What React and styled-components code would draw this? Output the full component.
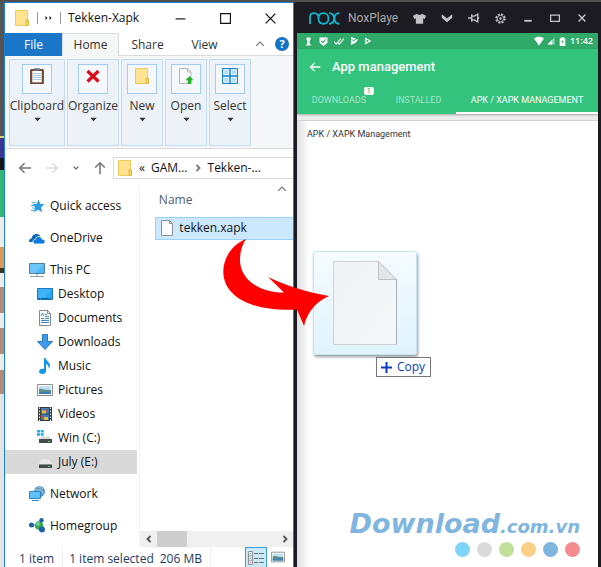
import styled, { createGlobalStyle, css } from "styled-components";

const navGroups = [
  [{ label: "Quick access", icon: "star" }],
  [{ label: "OneDrive", icon: "cloud" }],
  [
    { label: "This PC", icon: "pc" },
    { label: "Desktop", icon: "desktop", nested: true },
    { label: "Documents", icon: "documents", nested: true },
    { label: "Downloads", icon: "downloads", nested: true },
    { label: "Music", icon: "music", nested: true },
    { label: "Pictures", icon: "pictures", nested: true },
    { label: "Videos", icon: "videos", nested: true },
    { label: "Win (C:)", icon: "windrive", nested: true },
    { label: "July (E:)", icon: "drive", nested: true, selected: true },
  ],
  [{ label: "Network", icon: "network" }],
  [{ label: "Homegroup", icon: "homegroup" }],
];

const ribbonItems = [
  { label: "Clipboard", icon: "clipboard", width: 56 },
  { label: "Organize", icon: "cross", width: 52 },
  { label: "New", icon: "folder", width: 42 },
  { label: "Open", icon: "openfile", width: 42 },
  { label: "Select", icon: "select", width: 42 },
];

const dots = ["#7fd4f7", "#dadada", "#c3e09b", "#fbcf86", "#7fb5de", "#f58c8f"];

// 16x16 drawings, shared by the tree, the ribbon and the bars
const glyphs = {
  star: (
    <>
      <path d="M9.500 1.500l1.700 4.300 4.300.4-3.500 3.100 1.200 4.900-4.200-2.400-4.300 2.500 1.500-5L3.500 6l4.300-.2z" fill="#2a9be3" />
      <path d="M3 4.500h4M2 7.500h4M3 10h3M2 12.500h3" stroke="#2a9be3" strokeWidth=".8" />
    </>
  ),
  cloud: (
    <>
      <path d="M0 11.500c0-2 1-3 2.500-3C3 5.500 5 4 7.500 4c2 0 3.500 1 4 2.500L5 12H1z" fill="#0b67b8" />
      <path
        d="M6.500 14C4.500 14 4 12.500 4 11.700c0-1.500 1-2.300 2.200-2.300C6.700 7.300 8.300 6.300 10 6.500c1.600.1 2.700 1.100 3 2.600 2 .1 3 1.100 3 2.500S15 14 13.700 14z"
        fill="#0f7bdd"
        stroke="#fff"
        strokeWidth=".8"
      />
    </>
  ),
  pc: (
    <>
      <path d="M.5 1.500h15v10H.5z" fill="#4fb8f5" stroke="#4d7f9e" />
      <path d="M1 2h14L6 11H1z" fill="#6cc6f9" />
      <path d="M7 12h2v2H7z" fill="#bcc9d2" />
      <path d="M1 14.500h14" stroke="#8ba0ae" />
    </>
  ),
  desktop: (
    <>
      <path d="M.5 2.500h15v11H.5z" fill="#2ba6f3" stroke="#1678bd" />
      <path d="M1 3h14L8 12H1z" fill="#3fb2f7" />
      <path d="M1 12.500h14" stroke="#125f9b" strokeDasharray="2 1 8 1 1 1" />
    </>
  ),
  documents: (
    <>
      <path d="M2.500.5h8l3 3v12h-11z" fill="#fff" stroke="#84898d" />
      <path d="M10.500.5v3h3" fill="none" stroke="#84898d" />
      <path d="M4 6l1.500-3L7 6M8 4.500h2M8 6.500h4M4 8.500h3M8 8.500h4M4 10.500h8M4 12.500h8" fill="none" stroke="#3a8ac8" />
    </>
  ),
  downloads: <path d="M5.500.5h5v7h5L8 15.500.5 7.500h5z" fill="#3d9bea" stroke="#2b79bf" />,
  music: (
    <path
      d="M7 0h1.500c.5 3 4.500 4 4.500 7.500 0 1.500-.7 2.500-1.500 3.300.5-2.500-.3-4-2.500-4.800v7c0 1.800-1.500 3-3.500 3S2 15 2 13.600c0-1.600 1.500-2.800 3.500-2.800.5 0 1 .1 1.500.2z"
      fill="#1197ea"
    />
  ),
  pictures: (
    <>
      <path d="M.5 2.500h15v11H.5z" fill="#fff" stroke="#8d8d8d" />
      <path d="M2 4h12v8H2z" fill="#bfe1f5" />
      <path d="M2 7c3-1 5 1 12 1v4H2z" fill="#5d8f8a" />
      <path d="M2 10c4 1 8-1 12 0v2H2z" fill="#3b7fb6" />
    </>
  ),
  videos: (
    <>
      <path d="M1 1h14v14H1z" fill="#3a3a3a" />
      <path d="M2.500 1.500v14M13.500 1.500v14" stroke="#f2f2f2" strokeDasharray="1.500 1.500" />
      <path d="M4 2h8v5.500H4zM4 8.500h8V14H4z" fill="#3b7dc4" />
      <path d="M5 4.500h4v3H5zM7 11h4v3H7z" fill="#e2bf3c" />
      <path d="M9 3h2v3H9zM5 10h2v2H5z" fill="#bb5145" />
    </>
  ),
  drive: (
    <>
      <path d="M4.500 5.500h8L15 10H2z" fill="#e9e9e9" />
      <path d="M2 10h13v4H2z" fill="#454a4d" />
      <path d="M2 10.500h13" stroke="#8b8f92" />
      <path d="M11 12h2v1h-2z" fill="#4ee23c" />
    </>
  ),
  windrive: (
    <>
      <path d="M0 0h3v2.500H0zM3.700 0h3v2.500h-3zM0 3.200h3v2.600H0zM3.700 3.200h3v2.600h-3z" fill="#17b1ef" />
      <path d="M4.500 6.500h8L15 10H2z" fill="#d9d9d9" />
      <path d="M2 9h13v4H2z" fill="#454a4d" />
      <path d="M11 11h2v1h-2z" fill="#4ee23c" />
    </>
  ),
  network: (
    <>
      <circle cx="10.500" cy="5.500" r="5.500" fill="#5a94bd" />
      <path d="M6 3c2 2 4 0 6 1s1 4 3 4M9 1c2 1 3 0 5 2" stroke="#b5d6ea" fill="none" />
      <path d="M.5 5.500h11v7H.5z" fill="#5cc2f8" stroke="#2f86bd" />
      <path d="M3 14.500h7" stroke="#2f86bd" />
    </>
  ),
  homegroup: (
    <>
      <path d="M10 7l2-5M10 8l3 4M2 7h8" stroke="#7ba9c6" />
      <circle cx="10" cy="7.500" r="4.300" fill="#38a852" />
      <circle cx="9" cy="6" r="2" fill="#71d184" />
      <circle cx="2.500" cy="7" r="2.500" fill="#1c62a8" />
      <circle cx="12.500" cy="2.200" r="2.200" fill="#1c62a8" />
      <circle cx="13" cy="11.500" r="3" fill="#1c62a8" />
    </>
  ),
  clipboard: (
    <>
      <path d="M1.700 1.700h12.600v14H1.700z" fill="#7a5236" stroke="#5c3b25" />
      <path d="M3.300 3h9.400v11.300H3.300z" fill="#fff" />
      <path d="M4 5.500h8M4 7.500h8M4 9.500h8M4 11.500h8" stroke="#a9cbe6" />
      <path d="M5 .3h6v2.400H5z" fill="#6b7177" />
    </>
  ),
  cross: <path d="M2.500 3l11 10.500M13.500 3l-11 10.500" stroke="#dc0b1c" strokeWidth="3.200" />,
  folder: (
    <>
      <path d="M1.500.5h12V15.500h-12z" fill="#ffe391" stroke="#eecb5a" />
      <path d="M12 10h2.500v5.500H12z" fill="#fbd65f" stroke="#e2b63e" />
    </>
  ),
  openfile: (
    <>
      <path d="M1.500.5h8l3.500 3.500v11.500H1.500z" fill="#f9fafb" stroke="#b0b4b8" />
      <path d="M9.500.5V4H13" fill="none" stroke="#b0b4b8" />
      <path d="M11.500 8l4 4.200h-2.300V16H9.800v-3.800H7.500z" fill="#22b32b" />
    </>
  ),
  select: (
    <>
      <path d="M.5.5h15v15H.5z" fill="#aedcf9" stroke="#1e84cf" />
      <path d="M8 0v16M0 8h16" stroke="#1e84cf" strokeWidth="1.400" />
      <path d="M1.800 1.800h4.700v4.700H1.800zM9.500 1.800h4.700v4.700H9.500zM1.800 9.500h4.700v4.700H1.800zM9.500 9.500h4.700v4.700H9.500z" fill="none" stroke="#e6f5fe" />
    </>
  ),
  file: (
    <>
      <path d="M1.500.5h8l3 3v12h-11z" fill="#fbfbfb" stroke="#8f9499" />
      <path d="M9.500.5v3h3" fill="none" stroke="#8f9499" />
    </>
  ),
  details: (
    <>
      <path d="M.5 1.500h4v13h-4zM.5 5.800h4M.5 10.200h4" fill="#fff" stroke="#8a8f94" />
      <path d="M6 3.500h4M11 3.500h5M6 8.500h4M11 8.500h5M6 12.500h4M11 12.500h5" stroke="#6d7276" />
      <path d="M2 3.500h1" stroke="#3c78b4" />
      <path d="M2 8h1" stroke="#3f9b51" />
      <path d="M2 12.500h1" stroke="#d03b32" />
    </>
  ),
  back: <path d="M15 8H2M7.500 2.500L2 8l5.500 5.500" fill="none" stroke="currentColor" strokeWidth="1.800" />,
  forward: <path d="M1 8h13M8.500 2.500L14 8l-5.500 5.500" fill="none" stroke="currentColor" strokeWidth="1.800" />,
  up: <path d="M8 15V2M2.500 7.500L8 2l5.500 5.500" fill="none" stroke="currentColor" strokeWidth="1.800" />,
  chevDown: <path d="M3 5l5 5 5-5" fill="none" stroke="currentColor" strokeWidth="2.600" />,
  chevUp: <path d="M2 11l6-6 6 6" fill="none" stroke="currentColor" strokeWidth="2" />,
  chevLeft: <path d="M11 2L5 8l6 6" fill="none" stroke="currentColor" strokeWidth="3.600" />,
  chevRight: <path d="M5 2l6 6-6 6" fill="none" stroke="currentColor" strokeWidth="3.600" />,
  crumbArrow: <path d="M5 2l6 6-6 6" fill="none" stroke="#777" strokeWidth="3.600" />,
  caret: <path d="M1 4h14l-7 8z" fill="currentColor" />,
  minimize: <path d="M2 8.500h12" stroke="currentColor" strokeWidth="1.400" />,
  maximize: <path d="M2 2h12v12H2z" fill="none" stroke="currentColor" strokeWidth="1.400" />,
  close: <path d="M2 2l12 12M14 2L2 14" stroke="currentColor" strokeWidth="1.600" />,
  more: <path d="M1 4l4 4-4 4zM9 4l4 4-4 4z" fill="currentColor" />,
  shirt: <path d="M5 2c1 2 5 2 6 0l5 2.500-1.500 4-2-.8V14.500h-9V7.700l-2 .8L0 4.500z" fill="currentColor" />,
  bigChev: <path d="M1 3l7 5.500L15 3v4.500L8 13.500 1 7.500z" fill="currentColor" />,
  pin: <path d="M0 8h5M5 3v10M5 5.500h3.500L13 3v10l-4.500-2.500H5M13 8h2" fill="none" stroke="currentColor" strokeWidth="1.800" />,
  gear: (
    <>
      <circle cx="8" cy="8" r="6.200" fill="none" stroke="currentColor" strokeWidth="2.600" strokeDasharray="2.900 1.970" />
      <circle cx="8" cy="8" r="4.600" fill="none" stroke="currentColor" strokeWidth="1.200" />
      <circle cx="8" cy="8" r="1.800" fill="currentColor" />
    </>
  ),
  noxMin: <path d="M2 12.500h12" stroke="currentColor" strokeWidth="3" />,
  noxMax: <path d="M1 3.500h14v10H1z" fill="none" stroke="currentColor" strokeWidth="2" />,
  noxClose: <path d="M2.500 2.500l11 11M13.500 2.500l-11 11" stroke="currentColor" strokeWidth="2.200" />,
  keyhole: <path d="M5 1h6l1 3-2 3v4l3 4H3l3-4V7L4 4z" fill="currentColor" />,
  shield: (
    <>
      <path d="M1 1h14v9l-7 6-7-6z" fill="currentColor" />
      <path d="M4 7l3 3 5-6" fill="none" stroke="#2faa69" strokeWidth="2" />
    </>
  ),
  checks: <path d="M0 9l3.500 4L11 4M6 10l2.500 3L16 4" fill="none" stroke="currentColor" strokeWidth="1.800" />,
  playOutline: (
    <>
      <path d="M2 1l13 7-13 7z" fill="currentColor" />
      <path d="M5 5l5 3-5 3z" fill="#2faa69" />
    </>
  ),
  playCheck: (
    <>
      <path d="M2 0l14 5-4 6L2 16z" fill="currentColor" />
      <path d="M3 4l4 4 8-6" fill="none" stroke="#2faa69" strokeWidth="2" />
    </>
  ),
  wifi: <path d="M0 4c5-4 11-4 16 0L8 15z" fill="currentColor" />,
  signal: (
    <>
      <path d="M1 15L15 1v14z" fill="currentColor" opacity=".5" />
      <path d="M1 15l9-9v9z" fill="currentColor" />
    </>
  ),
  battery: (
    <>
      <path d="M3 2h3V0h4v2h3v14H3z" fill="currentColor" />
      <path d="M9 4L5.500 9H8l-1 4 3.500-5H8z" fill="#2faa69" />
    </>
  ),
};

function Icon({ name, size = 16 }) {
  return (
    <Glyph width={size} height={size} viewBox="0 0 16 16" aria-hidden="true">
      {glyphs[name]}
    </Glyph>
  );
}

function Explorer() {
  return (
    <ExplorerWindow>
      <TitleBar>
        <Icon name="folder" />
        <Divider />
        <Icon name="more" size={8} />
        <Divider />
        <WindowTitle>Tekken-Xapk</WindowTitle>
        <WindowButtons>
          <WindowButton aria-label="Minimize">
            <Icon name="minimize" size={13} />
          </WindowButton>
          <WindowButton aria-label="Maximize">
            <Icon name="maximize" size={13} />
          </WindowButton>
          <WindowButton aria-label="Close">
            <Icon name="close" size={13} />
          </WindowButton>
        </WindowButtons>
      </TitleBar>
      <MenuTabs>
        <MenuTab $kind="file">File</MenuTab>
        <MenuTab $kind="active">Home</MenuTab>
        <MenuTab>Share</MenuTab>
        <MenuTab>View</MenuTab>
        <MenuTools>
          <PlainButton aria-label="Collapse ribbon">
            <Icon name="chevUp" size={10} />
          </PlainButton>
          <HelpButton aria-label="Help">?</HelpButton>
        </MenuTools>
      </MenuTabs>
      <Ribbon>
        {ribbonItems.map((item) => (
          <RibbonButton key={item.label} $width={item.width}>
            <RibbonIcon>
              <Icon name={item.icon} />
            </RibbonIcon>
            <span>{item.label}</span>
            <Icon name="caret" size={7} />
          </RibbonButton>
        ))}
      </Ribbon>
      <AddressRow>
        <AddressButtons>
          <PlainButton aria-label="Back">
            <Icon name="back" size={14} />
          </PlainButton>
          <PlainButton aria-label="Forward" $faded>
            <Icon name="forward" size={14} />
          </PlainButton>
          <PlainButton aria-label="Recent locations">
            <Icon name="chevDown" size={8} />
          </PlainButton>
          <PlainButton aria-label="Up">
            <Icon name="up" size={14} />
          </PlainButton>
        </AddressButtons>
        <AddressBox>
          <Icon name="folder" />
          <Crumb href="#root">«</Crumb>
          <Crumb href="#games">GAM...</Crumb>
          <Icon name="crumbArrow" size={8} />
          <Crumb href="#tekken">Tekken-...</Crumb>
        </AddressBox>
      </AddressRow>
      <Body>
        <Tree aria-label="Folders">
          {navGroups.map((group) => (
            <TreeGroup key={group[0].label}>
              {group.map((item) => (
                <TreeLink
                  key={item.label}
                  href={`#${item.icon}`}
                  $nested={item.nested}
                  $selected={item.selected}
                >
                  <Icon name={item.icon} />
                  {item.label}
                </TreeLink>
              ))}
            </TreeGroup>
          ))}
        </Tree>
        <FilePane>
          <SortMark>
            <Icon name="chevUp" size={10} />
          </SortMark>
          <FileTable>
            <thead>
              <tr>
                <FileHead>Name</FileHead>
              </tr>
            </thead>
            <tbody>
              <tr>
                <FileCell>
                  <FileName>
                    <Icon name="file" />
                    tekken.xapk
                  </FileName>
                </FileCell>
              </tr>
            </tbody>
          </FileTable>
          <ScrollBar>
            <ScrollButton aria-label="Scroll left">
              <Icon name="chevLeft" size={8} />
            </ScrollButton>
            <ScrollThumb />
            <ScrollButton aria-label="Scroll right">
              <Icon name="chevRight" size={8} />
            </ScrollButton>
          </ScrollBar>
        </FilePane>
      </Body>
      <StatusBar>
        <StatusText $divided>1 item</StatusText>
        <StatusText>1 item selected</StatusText>
        <StatusText $divided>206 MB</StatusText>
        <ViewButtons>
          <ViewButton $active aria-label="Details view">
            <Icon name="details" />
          </ViewButton>
          <ViewButton aria-label="Thumbnail view">
            <Icon name="pictures" size={14} />
          </ViewButton>
        </ViewButtons>
      </StatusBar>
    </ExplorerWindow>
  );
}

function Nox() {
  return (
    <NoxWindow>
      <NoxBar>
        <NoxLogo viewBox="0 0 31 13" aria-label="nox">
          <path
            d="M1 12V5.500C1 3 2.500 1.200 5 1.200S9.500 3 9.500 6.500 11.500 11.800 14.500 11.800 19.500 9.500 19.500 6.500 17.500 1.200 14.500 1.200 9.500 3 9.500 6.500M20 1.200C23.500 1.200 25 3.500 25 6.500S23.500 11.800 20 11.800M30.500 1.200C27 1.200 25.500 3.500 25.500 6.500S27 11.800 30.500 11.800"
            fill="none"
            stroke="#10b5cf"
            strokeWidth="1.800"
          />
        </NoxLogo>
        <NoxTitle>NoxPlaye</NoxTitle>
        <NoxTools>
          <NoxButton aria-label="Themes">
            <Icon name="shirt" size={13} />
          </NoxButton>
          <NoxButton aria-label="More">
            <Icon name="bigChev" size={12} />
          </NoxButton>
          <NoxButton aria-label="Pin">
            <Icon name="pin" size={12} />
          </NoxButton>
          <NoxButton aria-label="Settings">
            <Icon name="gear" size={11} />
          </NoxButton>
          <NoxButton aria-label="Minimize">
            <Icon name="noxMin" size={10} />
          </NoxButton>
          <NoxButton aria-label="Maximize">
            <Icon name="noxMax" size={10} />
          </NoxButton>
          <NoxButton aria-label="Close">
            <Icon name="noxClose" size={10} />
          </NoxButton>
        </NoxTools>
      </NoxBar>
      <Screen>
        <PhoneStatus>
          <StatusIcons $gap={6}>
            <Icon name="keyhole" size={9} />
            <Icon name="shield" size={9} />
            <Icon name="checks" size={10} />
            <Icon name="playCheck" size={8} />
            <Icon name="playOutline" size={8} />
          </StatusIcons>
          <StatusIcons $gap={3}>
            <Icon name="wifi" size={10} />
            <Icon name="signal" size={8} />
            <Icon name="battery" size={9} />
            <Clock>11:42</Clock>
          </StatusIcons>
        </PhoneStatus>
        <AppHeader>
          <AppTitleRow>
            <BackButton aria-label="Back">
              <Icon name="back" size={12} />
            </BackButton>
            <AppTitle>App management</AppTitle>
          </AppTitleRow>
          <AppTabs>
            <AppTab>
              DOWNLOADS
              <Badge>1</Badge>
            </AppTab>
            <AppTab>INSTALLED</AppTab>
            <AppTab $active>APK / XAPK MANAGEMENT</AppTab>
          </AppTabs>
        </AppHeader>
        <Card>
          <CardTitle>APK / XAPK Management</CardTitle>
          <Brand>
            <BrandName>
              Download<BrandSuffix>.com.vn</BrandSuffix>
            </BrandName>
            <Dots>
              {dots.map((color) => (
                <Dot key={color} $color={color} />
              ))}
            </Dots>
          </Brand>
        </Card>
      </Screen>
    </NoxWindow>
  );
}

export default function App() {
  return (
    <Desktop>
      <GlobalStyle />
      <Behind />
      <Explorer />
      <Nox />
      <DragGhost>
        <svg width="66" height="86" viewBox="0 0 66 86" aria-hidden="true">
          <defs>
            <linearGradient id="paper" x1="0" y1="0" x2="1" y2="1">
              <stop offset="0" stopColor="#f0f2f4" />
              <stop offset="1" stopColor="#f5f8fa" />
            </linearGradient>
          </defs>
          <path d="M1.500 1.500h45l18 18v65h-63z" fill="url(#paper)" stroke="#ccd2d6" />
          <path d="M46.500 1.500v18h18z" fill="#e4e7e9" stroke="#bcc1c5" />
          <path d="M64.500 19.500v65" stroke="#a9afb3" />
        </svg>
      </DragGhost>
      <CopyTip>
        <svg width="11" height="11" viewBox="0 0 11 11" aria-hidden="true">
          <path d="M5.500 0v11M0 5.500h11" stroke="#0a3cc2" strokeWidth="2" />
        </svg>
        Copy
      </CopyTip>
      <RedArrow viewBox="222 238 108 90" aria-hidden="true">
        <path
          d="M246 239C229 246 222 262 223.500 275C226 298 254 312 297 309.500L304 326C307 313 315 302 329 296C305 292 285 285 268 277L284 292.500C262 293 240 281 240 260C240 252 242 245 246 239Z"
          fill="#fe0000"
        />
      </RedArrow>
    </Desktop>
  );
}

const GlobalStyle = createGlobalStyle`
  * {
    box-sizing: border-box;
  }
  body {
    margin: 0;
  }
  button {
    margin: 0;
    padding: 0;
    border: 0;
    background: none;
    color: inherit;
    font: inherit;
  }
  a {
    color: inherit;
    text-decoration: none;
  }
`;

const Glyph = styled.svg`
  display: block;
  flex-shrink: 0;
`;

const Desktop = styled.div`
  position: relative;
  display: flex;
  min-height: 100vh;
  padding-top: 2px;
  overflow: hidden;
  background: #4f4f4f;
  font-family: "Open Sans", "Noto Sans", sans-serif;
  font-size: 12px;
  line-height: 16px;
  color: #111;
`;

/* sliver of the windows that lie under the explorer */
const Behind = styled.div`
  flex: 0 0 4px;
  background: linear-gradient(
    #555 0 134px,
    #d8d660 134px 136px,
    #3d3691 136px 156px,
    #16161a 156px 168px,
    #33b673 168px 215px,
    #ececec 215px 245px,
    #d99a55 245px 266px,
    #3b3420 266px 271px,
    #ececec 271px 285px,
    #b58b78 285px 311px,
    #ececec 311px 326px,
    #b58b78 326px 352px,
    #ececec 352px 368px,
    #b58b78 368px 392px,
    #e4e4e4 392px
  );
`;

const ExplorerWindow = styled.section`
  display: flex;
  flex-direction: column;
  flex: 288 1 0;
  min-width: 0;
  border: 1px solid #1c7fd2;
  border-bottom: 0;
  background: #fff;
`;

const TitleBar = styled.header`
  display: flex;
  align-items: center;
  gap: 7px;
  height: 30px;
  padding-left: 9px;
`;

const Divider = styled.span`
  width: 1px;
  height: 12px;
  background: #999;
`;

const WindowTitle = styled.span`
  white-space: nowrap;
`;

const WindowButtons = styled.div`
  display: flex;
  margin-left: auto;
`;

const WindowButton = styled.button`
  display: grid;
  place-items: center;
  width: 45px;
  height: 30px;
`;

const MenuTabs = styled.nav`
  display: flex;
  height: 23px;
  border-bottom: 1px solid #dadbdc;
`;

const MenuTab = styled.button`
  width: 57px;
  height: 23px;
  color: #333;
  ${({ $kind }) =>
    $kind === "file" &&
    css`
      background: #1976c9;
      color: #fff;
    `}
  ${({ $kind }) =>
    $kind === "active" &&
    css`
      border: 1px solid #dadbdc;
      border-width: 1px 1px 0;
      background: #f5f6f7;
    `}
`;

const MenuTools = styled.div`
  display: flex;
  flex: 1;
  align-items: center;
  justify-content: flex-end;
  gap: 10px;
  padding-right: 4px;
`;

const PlainButton = styled.button`
  display: grid;
  place-items: center;
  color: ${({ $faded }) => ($faded ? "#dcdcdc" : "#777")};
`;

const HelpButton = styled.button`
  width: 14px;
  height: 14px;
  border-radius: 50%;
  background: #1474c8;
  color: #fff;
  font-size: 11px;
  font-weight: 700;
  line-height: 14px;
`;

const Ribbon = styled.div`
  display: flex;
  gap: 2px;
  height: 93px;
  padding: 3px 4px;
  border-bottom: 1px solid #dadbdc;
  background: #f5f6f7;
`;

const RibbonButton = styled.button`
  display: flex;
  flex-direction: column;
  align-items: center;
  width: ${({ $width }) => $width}px;
  height: 87px;
  padding-top: 4px;
  border: 1px solid #c2dcf3;
  background: #ecf2f7;
  color: #333;
  line-height: 20px;
`;

const RibbonIcon = styled.span`
  display: grid;
  place-items: center;
  width: 30px;
  height: 30px;
  padding-bottom: 6px;
  border: 1px solid #a2cdf3;
  margin-bottom: 2px;
  background: #f4f8fc;
`;

const AddressRow = styled.div`
  display: flex;
  align-items: center;
  gap: 6px;
  height: 37px;
  padding-left: 13px;
`;

const AddressButtons = styled.div`
  display: flex;
  align-items: center;
  gap: 13px;
`;

const AddressBox = styled.div`
  display: flex;
  flex: 1;
  align-items: center;
  gap: 6px;
  height: 22px;
  padding-left: 3px;
  border: 1px solid #d9d9d9;
  border-right: 0;
`;

const Crumb = styled.a`
  white-space: nowrap;
`;

const Body = styled.div`
  display: flex;
  flex: 1;
`;

const Tree = styled.nav`
  display: flex;
  flex-direction: column;
  flex: 0 0 47%;
  gap: 8px;
  padding: 8px 2px 8px 0;
  border-right: 1px solid #f2f2f2;
`;

const TreeGroup = styled.div`
  display: flex;
  flex-direction: column;
`;

const TreeLink = styled.a`
  display: flex;
  align-items: center;
  gap: 5px;
  height: 24px;
  padding-left: ${({ $nested }) => ($nested ? 32 : 24)}px;
  background: ${({ $selected }) => ($selected ? "#d9d9d9" : "none")};
  white-space: nowrap;
`;

const FilePane = styled.div`
  display: flex;
  flex-direction: column;
  flex: 1;
  min-width: 0;
`;

const SortMark = styled.span`
  display: flex;
  align-items: center;
  justify-content: flex-end;
  height: 5px;
  padding-right: 6px;
  color: #777;
`;

const FileTable = styled.table`
  margin: 0 0 auto 15px;
  border-collapse: collapse;
`;

const FileHead = styled.th`
  height: 26px;
  padding: 0 0 8px 3px;
  color: #4c607a;
  font-weight: 400;
  text-align: left;
`;

const FileCell = styled.td`
  height: 22px;
  padding: 0 4px;
  border: 1px solid #99d1ff;
  border-right: 0;
  background: #cce8ff;
`;

const FileName = styled.span`
  display: flex;
  align-items: center;
  gap: 3px;
`;

const ScrollBar = styled.div`
  display: flex;
  height: 16px;
  background: #f0f0f0;
  color: #555;
`;

const ScrollButton = styled.button`
  display: grid;
  place-items: center;
  width: 17px;
  &:last-child {
    margin-left: auto;
  }
`;

const ScrollThumb = styled.span`
  width: 30px;
  background: #cdcdcd;
`;

const StatusBar = styled.footer`
  display: flex;
  gap: 6px;
  height: 20px;
  padding-left: 14px;
  color: #1f3a60;
  line-height: 24px;
`;

const StatusText = styled.span`
  padding-right: ${({ $divided }) => ($divided ? 8 : 0)}px;
  border-right: ${({ $divided }) => ($divided ? "1px solid #eee" : "0")};
  white-space: nowrap;
`;

const ViewButtons = styled.div`
  display: flex;
  flex: 1;
  justify-content: flex-end;
  padding-right: 4px;
`;

const ViewButton = styled.button`
  display: grid;
  place-items: center;
  width: 22px;
  height: 20px;
  ${({ $active }) =>
    $active &&
    css`
      border: 1px solid #3a9fd8;
      border-bottom: 0;
      background: #cbe8f6;
    `}
`;

const NoxWindow = styled.section`
  display: flex;
  flex-direction: column;
  flex: 301 1 0;
  min-width: 0;
  padding: 1px 3px 0;
  background: #1c1b21;
  font-family: Roboto, "Liberation Sans", sans-serif;
`;

const NoxBar = styled.header`
  display: flex;
  align-items: center;
  height: 30px;
  padding-left: 12px;
  color: #c4c4c6;
`;

const NoxLogo = styled.svg`
  flex-shrink: 0;
  width: 31px;
  height: 13px;
`;

const NoxTitle = styled.span`
  margin-left: 8px;
  color: #aaaaac;
  white-space: nowrap;
`;

const NoxTools = styled.div`
  display: flex;
  margin-left: auto;
  padding-right: 3px;
`;

const NoxButton = styled.button`
  display: grid;
  place-items: center;
  width: 27px;
  height: 30px;
`;

const Screen = styled.div`
  display: flex;
  flex-direction: column;
  flex: 1;
  background: #ececec;
`;

const PhoneStatus = styled.div`
  display: flex;
  align-items: center;
  justify-content: space-between;
  height: 16px;
  padding: 0 5px 0 7px;
  background: #2faa69;
  color: #fff;
`;

const StatusIcons = styled.div`
  display: flex;
  align-items: center;
  gap: ${({ $gap }) => $gap}px;
`;

const Clock = styled.span`
  font-family: "Open Sans", sans-serif;
  font-size: 9px;
  font-weight: 600;
`;

const AppHeader = styled.div`
  background: #33c37d;
  box-shadow: 0 1px 2px rgba(0, 0, 0, 0.3);
  color: #fff;
`;

const AppTitleRow = styled.div`
  display: flex;
  align-items: center;
  gap: 11px;
  height: 36px;
  padding-left: 12px;
`;

const BackButton = styled.button`
  display: grid;
  place-items: center;
`;

const AppTitle = styled.h1`
  margin: 0;
  font-size: 13px;
  font-weight: 500;
`;

const AppTabs = styled.div`
  display: flex;
  height: 29px;
`;

const AppTab = styled.button`
  position: relative;
  flex: 1 1 auto;
  padding-top: 2px;
  border-bottom: 2px solid ${({ $active }) => ($active ? "#fff" : "transparent")};
  color: ${({ $active }) => ($active ? "#fff" : "#a8e4c7")};
  font-size: 9px;
  white-space: nowrap;
`;

const Badge = styled.span`
  position: absolute;
  top: 2px;
  right: 7px;
  width: 10px;
  height: 8px;
  border-radius: 2px;
  background: #f4fbf7;
  color: #2faa69;
  font-size: 7px;
  line-height: 8px;
`;

const Card = styled.div`
  display: flex;
  flex-direction: column;
  flex: 1;
  margin-top: 6px;
  padding: 5px 18px 10px 10px;
  border-top: 1px solid #d2d2d2;
  background: linear-gradient(90deg, #dedede, #fff 12px);
`;

const CardTitle = styled.h2`
  margin: 0;
  color: #333;
  font-size: 9px;
  font-weight: 400;
`;

const Brand = styled.div`
  display: flex;
  flex-direction: column;
  align-items: flex-end;
  gap: 1px;
  margin-top: auto;
`;

const BrandName = styled.div`
  color: #7fb5de;
  font-family: "DejaVu Sans", sans-serif;
  font-size: 27px;
  font-style: italic;
  font-weight: 700;
  line-height: 28px;
  white-space: nowrap;
`;

const BrandSuffix = styled.span`
  font-size: 18px;
`;

const Dots = styled.div`
  display: flex;
  gap: 7px;
`;

const Dot = styled.span`
  width: 15px;
  height: 15px;
  border-radius: 50%;
  background: ${({ $color }) => $color};
`;

const DragGhost = styled.div`
  position: absolute;
  top: 251px;
  left: 313px;
  display: grid;
  place-items: center;
  width: 104px;
  height: 104px;
  border: 1px solid #c5e5f4;
  border-radius: 3px;
  background: linear-gradient(#f5fcff, #e0f3fd);
  box-shadow: 1px 2px 3px rgba(0, 0, 0, 0.4);
`;

const CopyTip = styled.div`
  position: absolute;
  top: 357px;
  left: 376px;
  display: flex;
  align-items: center;
  gap: 5px;
  height: 20px;
  padding: 0 5px 0 4px;
  border: 1px solid #767676;
  background: #fff;
  color: #0a3cc2;
`;

const RedArrow = styled.svg`
  position: absolute;
  top: 238px;
  left: 222px;
  width: 108px;
  height: 90px;
`;
